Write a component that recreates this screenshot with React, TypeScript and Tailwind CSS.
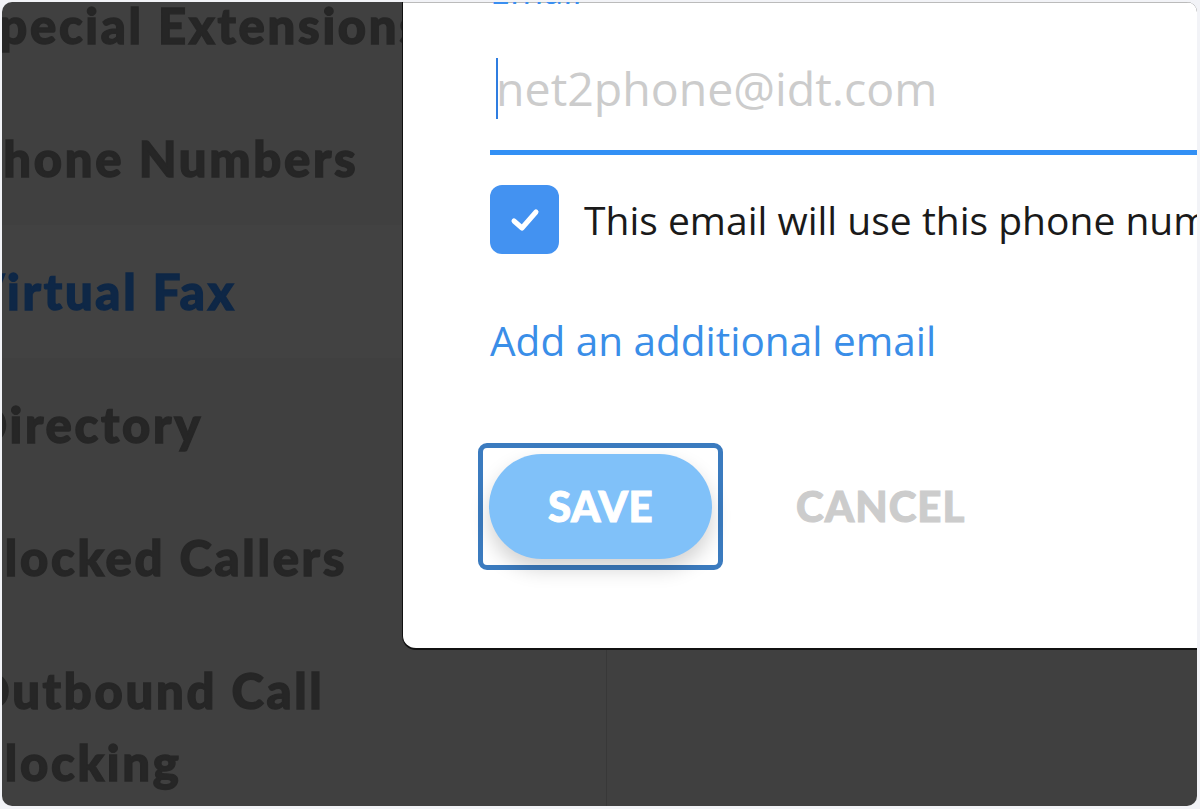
import React from 'react';

const navItems = [
  { label: 'Special Extensions', active: false },
  { label: 'Phone Numbers', active: false },
  { label: 'Virtual Fax', active: true },
  { label: 'Directory', active: false },
  { label: 'Blocked Callers', active: false },
  { label: 'Outbound Call Blocking', active: false },
];

export default function App() {
  return (
    <div className="w-[1200px] h-[809px] bg-[#f2f3f7] pt-[2px] pl-[2px] pr-[3px] pb-[3px] overflow-hidden">
      <div className="relative w-full h-full bg-[#404040] rounded-[10px] overflow-hidden">
        {/* Sidebar (dimmed behind modal) */}
        <aside className="w-[605px] h-[calc(100%+43px)] border-r border-[#383838] -mt-[43px] font-['Lato','Liberation_Sans',sans-serif] font-black">
          {navItems.map((item) => (
            <div
              key={item.label}
              className={`min-h-[133px] pt-[30px] -ml-[32px] pr-[60px] ${item.active ? 'bg-[#424242]' : ''}`}
            >
              <p
                className={`text-[49px] leading-[72px] tracking-[2.7px] [-webkit-text-stroke:1.4px_currentColor] whitespace-pre-line ${
                  item.active ? 'text-[#0e2746]' : 'text-[#262626]'
                }`}
              >
                {item.label === 'Outbound Call Blocking' ? 'Outbound Call\nBlocking' : item.label}
              </p>
            </div>
          ))}
        </aside>

        {/* Modal */}
        <div className="absolute left-[400px] top-0 right-0 h-[648px] bg-white rounded-bl-[14px] border-l border-b-2 border-[#111] shadow-[0_1px_0_#bbb_inset]">
          <div className="pl-[87px] font-['Open_Sans','Noto_Sans',sans-serif]">
            <p className="-mt-[33px] text-[36px] leading-[44px] text-[#3a8ef0]">Email</p>

            <div className="mt-[44px] border-b-[5px] border-[#3290f5] pb-[31px] flex items-start">
              <span className="w-[2px] h-[61px] bg-[#2f7de0] mt-[1px] ml-[6px]"></span>
              <span className="text-[46.5px] leading-[62px] text-[#cccccc] -ml-[2px]">net2phone@idt.com</span>
            </div>

            <div className="mt-[30px] flex items-center gap-[25px] whitespace-nowrap">
              <div className="w-[69px] h-[69px] shrink-0 rounded-[12px] bg-[#4392f1] flex items-center justify-center">
                <svg width="30" height="26" viewBox="0 0 30 26" fill="none">
                  <path d="M4 14 L12 21 L26 5" stroke="white" strokeWidth="5" strokeLinecap="round" strokeLinejoin="round" />
                </svg>
              </div>
              <span className="text-[39px] leading-[50px] text-[#1a1a1a]">This email will use this phone number</span>
            </div>

            <p className="mt-[60px] text-[40.5px] leading-[54px] text-[#3a8ee8]">Add an additional email</p>

            <div className="mt-[75px] flex items-center -ml-[12px] font-['Lato','Liberation_Sans',sans-serif] font-black">
              <div className="rounded-[9px] border-[5px] border-[#3b7bbf] p-[6px]">
                <button className="w-[223px] h-[105px] rounded-full bg-[#80c1f9] text-white text-[42px] tracking-[0.5px] [-webkit-text-stroke:1px_currentColor] shadow-[0_10px_20px_rgba(0,0,0,0.18)]">
                  SAVE
                </button>
              </div>
              <button className="ml-[73px] text-[42px] text-[#cccccc] tracking-[1px] [-webkit-text-stroke:1px_currentColor]">CANCEL</button>
            </div>
          </div>
        </div>
      </div>
    </div>
  );
}
